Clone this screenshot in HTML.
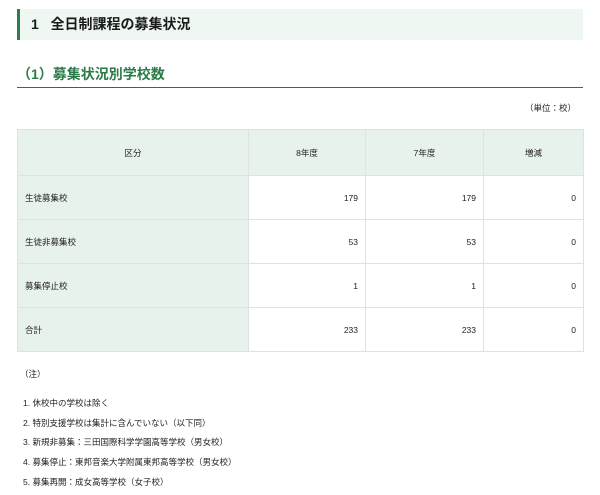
<!DOCTYPE html>
<html><head><meta charset="utf-8"><style>
*{margin:0;padding:0;box-sizing:border-box}
body{width:600px;height:495px;background:#fff;font-family:"Liberation Sans","Noto Sans CJK JP",sans-serif;color:#222;position:relative;overflow:hidden}
.h1{position:absolute;left:17px;top:9px;width:566px;height:31px;background:#eef7f1;border-left:3px solid #2e7d4f;font-size:14px;font-weight:bold;line-height:31px;padding-left:11px;color:#1a1a1a}
.h2{position:absolute;left:17px;top:62px;width:566px;height:26px;border-bottom:1.5px solid #2e6e48;font-size:14px;font-weight:bold;color:#2a7a48;line-height:24px;padding-left:0}
.unit{position:absolute;right:24px;top:102px;font-size:8.5px}
table{position:absolute;left:17px;top:129px;border-collapse:collapse;font-size:8.5px}
td{border:1px solid #dde3df;height:44px;padding:0 7px}
tr:first-child td{height:46px;background:#e8f2ec;text-align:center}
td.l{background:#e8f2ec;width:231px}
td.n{text-align:right}
.notes{position:absolute;left:23px;font-size:8.5px}
</style></head><body>
<div class="h1">1&nbsp;&nbsp;&nbsp;全日制課程の募集状況</div>
<div class="h2">（1）募集状況別学校数</div>
<div class="unit">（単位：校）</div>
<table>
<tr><td style="width:231px">区分</td><td style="width:117px">8年度</td><td style="width:118px">7年度</td><td style="width:100px">増減</td></tr>
<tr><td class="l">生徒募集校</td><td class="n">179</td><td class="n">179</td><td class="n">0</td></tr>
<tr><td class="l">生徒非募集校</td><td class="n">53</td><td class="n">53</td><td class="n">0</td></tr>
<tr><td class="l">募集停止校</td><td class="n">1</td><td class="n">1</td><td class="n">0</td></tr>
<tr><td class="l">合計</td><td class="n">233</td><td class="n">233</td><td class="n">0</td></tr>
</table>
<div class="notes" style="top:368px;left:20px">（注）</div>
<div class="notes" style="top:397px">1. 休校中の学校は除く</div>
<div class="notes" style="top:417px">2. 特別支援学校は集計に含んでいない（以下同）</div>
<div class="notes" style="top:436px">3. 新規非募集：三田国際科学学園高等学校（男女校）</div>
<div class="notes" style="top:456px">4. 募集停止：東邦音楽大学附属東邦高等学校（男女校）</div>
<div class="notes" style="top:476px">5. 募集再開：成女高等学校（女子校）</div>
</body></html>
